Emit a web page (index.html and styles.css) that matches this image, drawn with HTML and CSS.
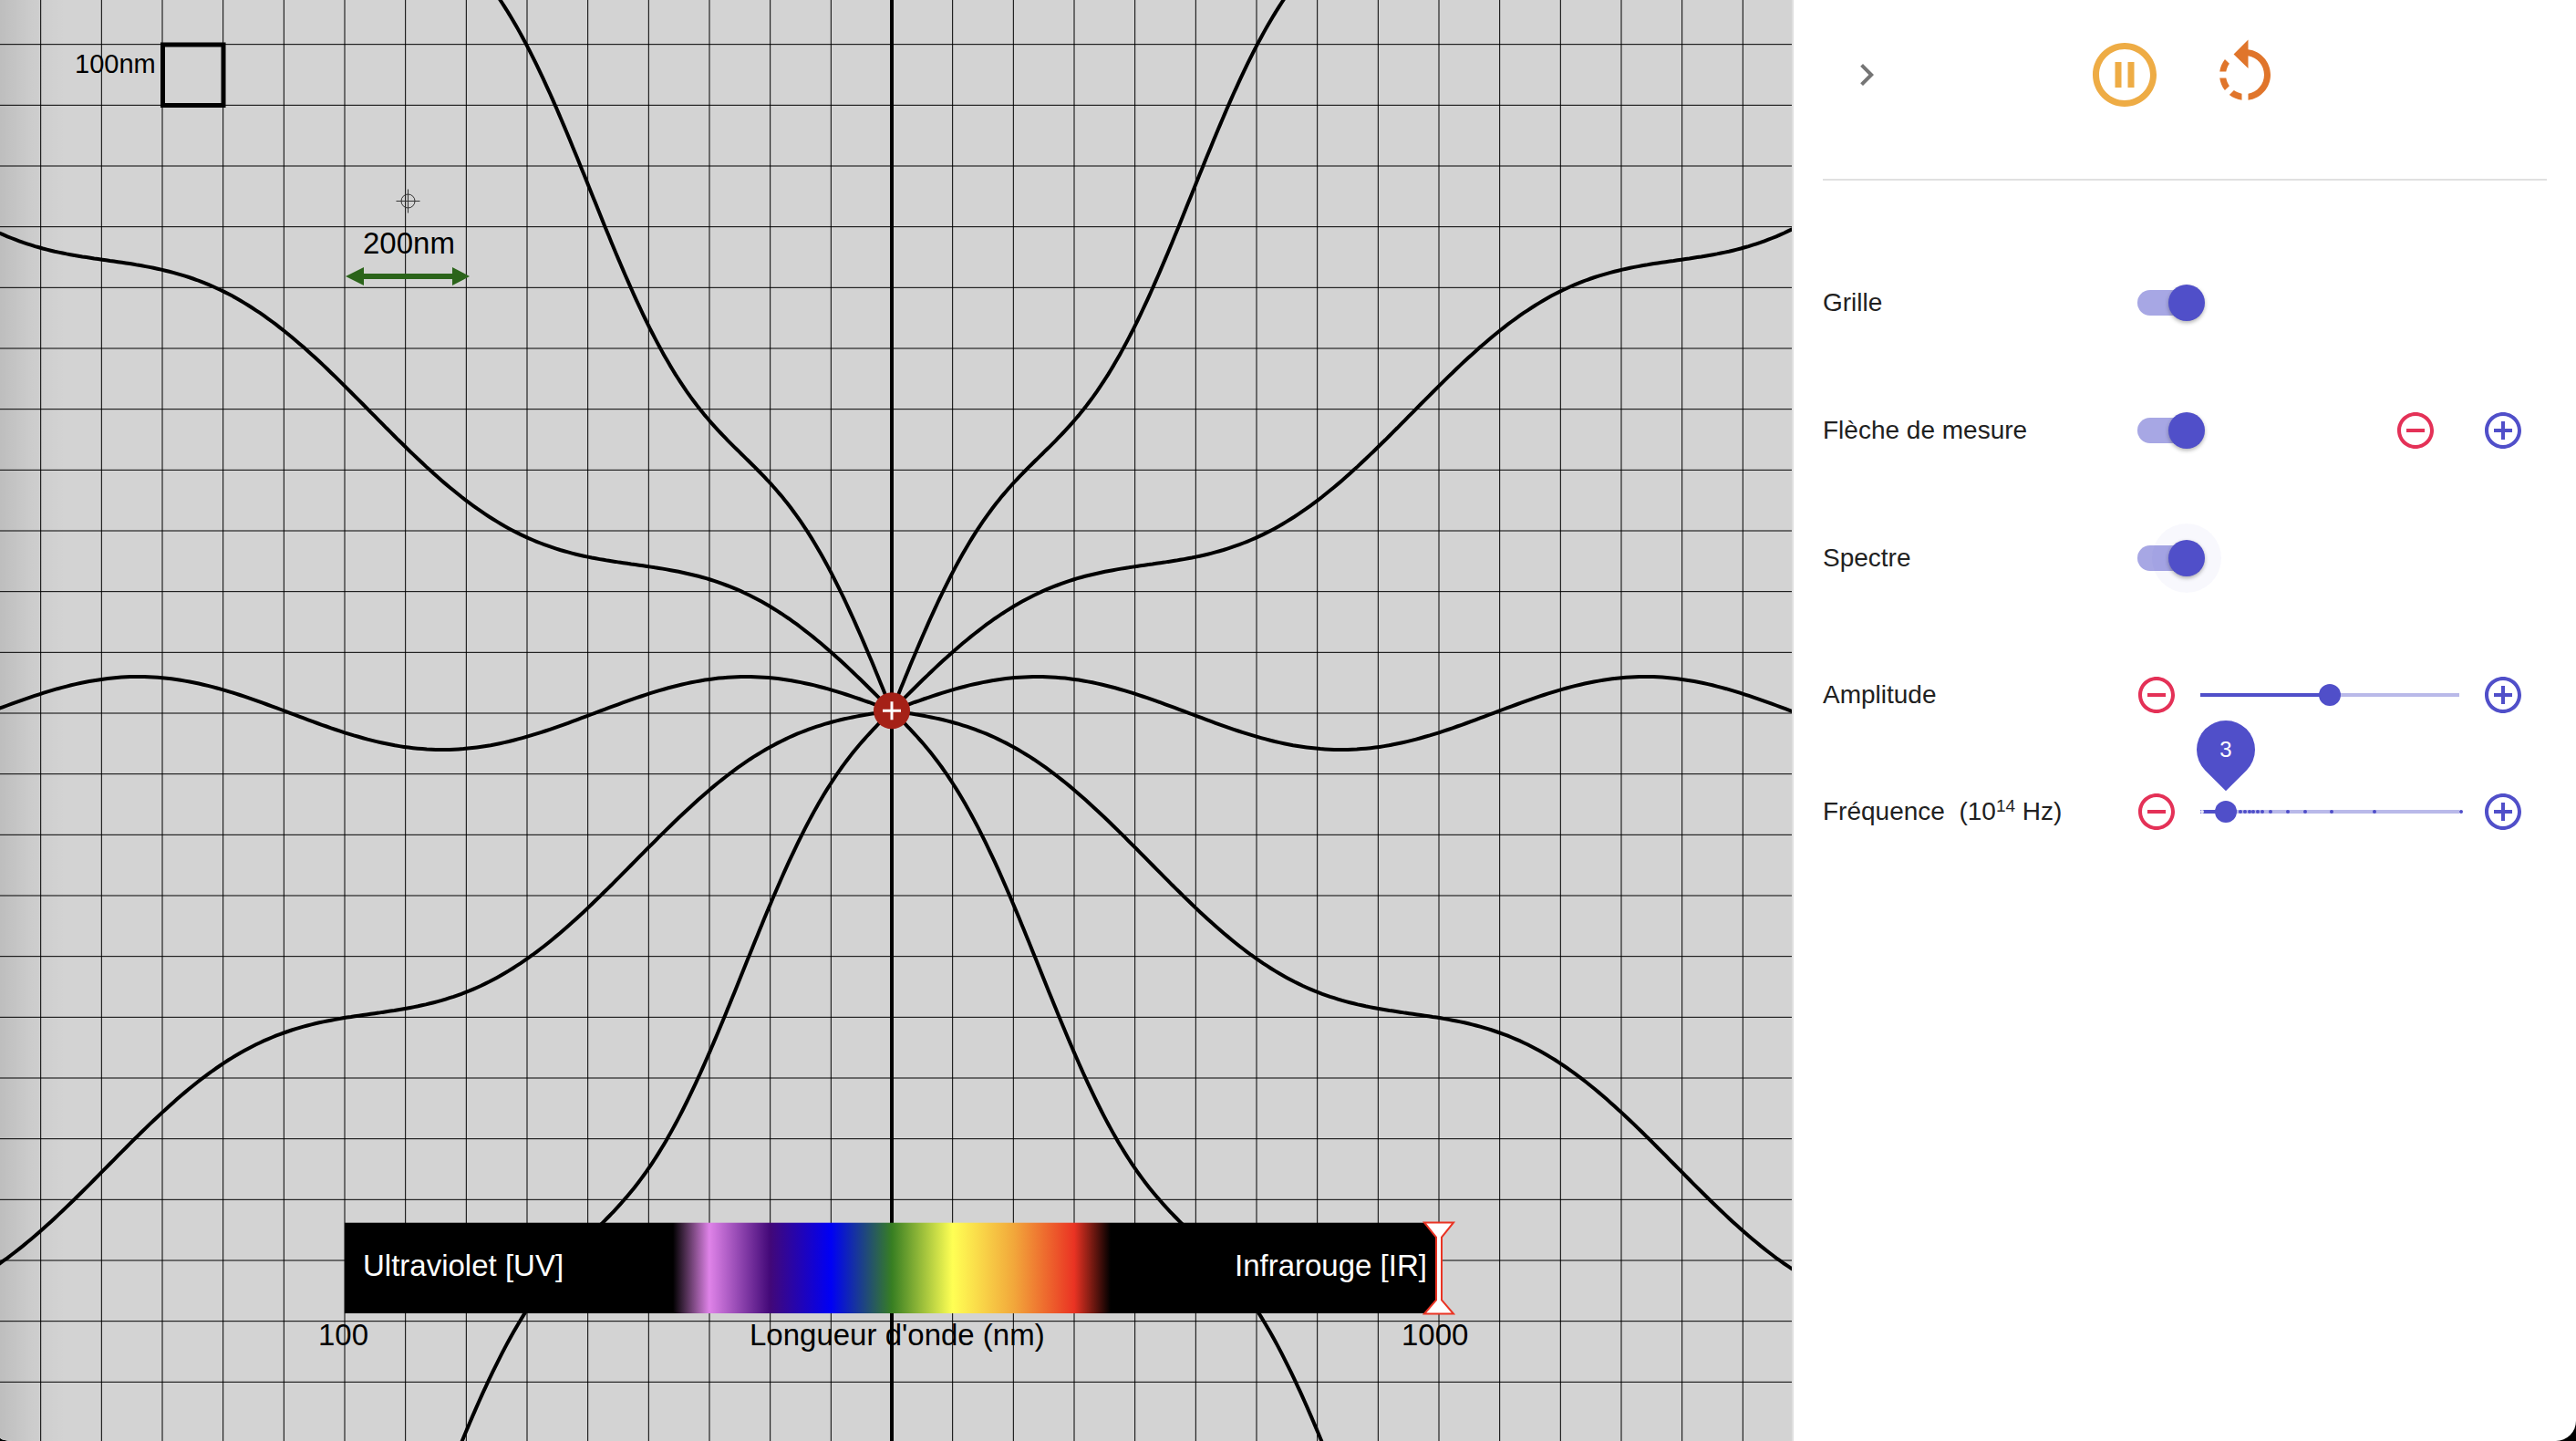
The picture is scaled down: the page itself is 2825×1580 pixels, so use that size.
FILE: index.html
```html
<!DOCTYPE html>
<html lang="fr">
<head>
<meta charset="utf-8">
<meta name="viewport" content="width=device-width, initial-scale=1">
<title>Ondes électromagnétiques</title>
<link rel="stylesheet" href="styles.css">
</head>
<body>
<div class="app">
  <main class="stage">
    <svg class="scene" viewBox="0 0 1965 1580" preserveAspectRatio="xMidYMid slice" role="img" aria-label="Lignes de champ">
      <defs>
        <linearGradient id="spectrum">
          <stop offset="30%" stop-color="#000"/>
          <stop offset="33.33%" stop-color="#df83e8"/>
          <stop offset="38.89%" stop-color="#420878"/>
          <stop offset="44.44%" stop-color="#0000f5"/>
          <stop offset="50%" stop-color="#377e22"/>
          <stop offset="55.56%" stop-color="#ffff54"/>
          <stop offset="61.11%" stop-color="#f2a83b"/>
          <stop offset="66.67%" stop-color="#ea3323"/>
          <stop offset="70%" stop-color="#000"/>
        </linearGradient>
      </defs>
      <path class="grid-lines" id="grid"/>
      <rect class="scale-box" x="178.5" y="49" width="66.5" height="66.5"/>
      <text class="note small" x="82" y="80">100nm</text>

      <g class="crosshair">
        <circle cx="447.5" cy="220.5" r="7.5"/>
        <path d="M434.5 220.5h26M447.5 207.5v26"/>
      </g>
      <text class="note" x="398" y="278">200nm</text>
      <path class="arrow" d="M379 303l20-10v7h97v-7l19 10-19 10v-7h-97v7z"/>

      <g class="field" id="field"></g>
      <circle class="charge" cx="978" cy="779.3" r="20"/>
      <path class="charge-sign" d="M968 779.3h20M978 769.3v20"/>

      <rect x="378" y="1340.7" width="1200" height="99.3" fill="url(#spectrum)"/>
      <text class="note light" x="398" y="1399">Ultraviolet [UV]</text>
      <text class="note light" x="1354" y="1399">Infrarouge [IR]</text>
      <path class="marker" d="M1562 1340.500h32l-13 16v69l13 15h-32l13-15v-69z"/>
      <text class="note" x="349" y="1475">100</text>
      <text class="note" x="822" y="1475">Longueur d'onde (nm)</text>
      <text class="note" x="1537" y="1475">1000</text>
    </svg>
  </main>

  <aside class="panel">
    <header class="toolbar">
      <button class="icon-button muted" type="button" aria-label="Replier">
        <svg class="icon" viewBox="0 0 24 24"><path d="M8.59 16.59 13.17 12 8.59 7.410 10 6l6 6-6 6z"/></svg>
      </button>
      <div class="playback">
        <button class="icon-button pause" type="button" aria-label="Pause">
          <svg class="icon large" viewBox="0 0 24 24"><path d="M9 16h2V8H9v8zm3-14C6.480 2 2 6.480 2 12s4.480 10 10 10 10-4.480 10-10S17.520 2 12 2zm0 18c-4.410 0-8-3.590-8-8s3.590-8 8-8 8 3.590 8 8-3.590 8-8 8zm1-4h2V8h-2v8z"/></svg>
        </button>
        <button class="icon-button reset" type="button" aria-label="Réinitialiser">
          <svg class="icon large" viewBox="0 0 24 24"><path d="M7.110 8.530 5.700 7.110C4.800 8.270 4.240 9.610 4.070 11h2.020c.14-.87.49-1.720 1.020-2.470zM6.090 13H4.070c.17 1.390.72 2.730 1.620 3.890l1.410-1.420c-.52-.75-.87-1.590-1.010-2.470zm1.010 5.320c1.160.9 2.510 1.440 3.900 1.610V17.900c-.87-.15-1.710-.49-2.460-1.030L7.100 18.320zM13 4.070V1L8.450 5.550 13 10V6.090c2.840.48 5 2.940 5 5.910s-2.160 5.430-5 5.910v2.020c3.950-.49 7-3.850 7-7.930s-3.050-7.440-7-7.930z"/></svg>
        </button>
      </div>
    </header>

    <form class="controls">
      <div class="row">
        <label for="grille">Grille</label>
        <input class="switch" type="checkbox" id="grille" checked>
      </div>
      <div class="row">
        <label for="fleche">Flèche de mesure</label>
        <input class="switch" type="checkbox" id="fleche" checked>
        <div class="stepper">
          <button class="icon-button minus" type="button" aria-label="Réduire la flèche">
            <svg class="icon" viewBox="0 0 24 24"><path d="M7 11v2h10v-2H7zm5-9C6.480 2 2 6.480 2 12s4.480 10 10 10 10-4.480 10-10S17.520 2 12 2zm0 18c-4.410 0-8-3.590-8-8s3.590-8 8-8 8 3.590 8 8-3.590 8-8 8z"/></svg>
          </button>
          <button class="icon-button plus" type="button" aria-label="Agrandir la flèche">
            <svg class="icon" viewBox="0 0 24 24"><path d="M13 7h-2v4H7v2h4v4h2v-4h4v-2h-4V7zm-1-5C6.480 2 2 6.480 2 12s4.480 10 10 10 10-4.480 10-10S17.520 2 12 2zm0 18c-4.410 0-8-3.590-8-8s3.590-8 8-8 8 3.590 8 8-3.590 8-8 8z"/></svg>
          </button>
        </div>
      </div>
      <div class="row">
        <label for="spectre">Spectre</label>
        <input class="switch active" type="checkbox" id="spectre" checked>
      </div>

      <div class="sliders">
        <div class="row">
          <label for="amplitude">Amplitude</label>
          <button class="icon-button minus" type="button" aria-label="Diminuer l'amplitude">
            <svg class="icon" viewBox="0 0 24 24"><path d="M7 11v2h10v-2H7zm5-9C6.480 2 2 6.480 2 12s4.480 10 10 10 10-4.480 10-10S17.520 2 12 2zm0 18c-4.410 0-8-3.590-8-8s3.590-8 8-8 8 3.590 8 8-3.590 8-8 8z"/></svg>
          </button>
          <div class="slider" style="--value: 50%">
            <input type="range" id="amplitude" min="0" max="100" value="50">
          </div>
          <button class="icon-button plus" type="button" aria-label="Augmenter l'amplitude">
            <svg class="icon" viewBox="0 0 24 24"><path d="M13 7h-2v4H7v2h4v4h2v-4h4v-2h-4V7zm-1-5C6.480 2 2 6.480 2 12s4.480 10 10 10 10-4.480 10-10S17.520 2 12 2zm0 18c-4.410 0-8-3.590-8-8s3.590-8 8-8 8 3.590 8 8-3.590 8-8 8z"/></svg>
          </button>
        </div>
        <div class="row">
          <label for="frequence">Fréquence&nbsp; (10<sup>14</sup> Hz)</label>
          <button class="icon-button minus" type="button" aria-label="Diminuer la fréquence">
            <svg class="icon" viewBox="0 0 24 24"><path d="M7 11v2h10v-2H7zm5-9C6.480 2 2 6.480 2 12s4.480 10 10 10 10-4.480 10-10S17.520 2 12 2zm0 18c-4.410 0-8-3.590-8-8s3.590-8 8-8 8 3.590 8 8-3.590 8-8 8z"/></svg>
          </button>
          <div class="slider" id="frequence-slider" style="--value: 10%">
            <input type="range" id="frequence" min="0" max="30" step="0.1" value="3">
            <output class="bubble" for="frequence"><span>3</span></output>
          </div>
          <button class="icon-button plus" type="button" aria-label="Augmenter la fréquence">
            <svg class="icon" viewBox="0 0 24 24"><path d="M13 7h-2v4H7v2h4v4h2v-4h4v-2h-4V7zm-1-5C6.480 2 2 6.480 2 12s4.480 10 10 10 10-4.480 10-10S17.520 2 12 2zm0 18c-4.410 0-8-3.590-8-8s3.590-8 8-8 8 3.590 8 8-3.590 8-8 8z"/></svg>
          </button>
        </div>
      </div>
    </form>
  </aside>
</div>
<script src="script.js"></script>
</body>
</html>
```

FILE: styles.css
```css
:root {
  --primary: #504fc9;
  --danger: #e43157;
  --divider: #e0e0e0;
}

* { box-sizing: border-box; }

body {
  margin: 0;
  background: #000;
  color: #212121;
  font-family: "Liberation Sans", Arial, Helvetica, sans-serif;
  font-size: 28px;
  line-height: 40px;
}

.app {
  display: grid;
  grid-template-columns: minmax(0, 1fr) 858px;
  min-height: 100vh;
  overflow: hidden;
  border-radius: 0 0 22px 14px / 0 0 22px 4px;
  background: #fff;
}

/* Simulation */

.stage {
  position: relative;
  border-right: 2px solid var(--divider);
  background: #d3d3d3;
}

.stage::before {
  content: "";
  position: absolute;
  inset: 0 auto 0 0;
  width: 72px;
  background: linear-gradient(to right, rgba(0, 0, 0, .1), rgba(0, 0, 0, .03) 50%, transparent);
}

.scene {
  position: absolute;
  inset: 0;
  width: 100%;
  height: 100%;
}

.grid-lines { stroke: #000; stroke-width: 1; fill: none; }
.scale-box { stroke: #000; stroke-width: 5; fill: none; }
.crosshair { stroke: #333; stroke-width: 1; fill: none; }
.arrow { fill: #2b641a; }
.field { stroke: #000; stroke-width: 4; fill: none; }
.charge { fill: #a52117; }
.charge-sign { stroke: #fff; stroke-width: 3; }
.marker { fill: #fff; stroke: #ea3323; stroke-width: 2; }
.note { font-size: 33px; fill: #000; }
.note.small { font-size: 29px; }
.note.light { fill: #fff; }

/* Panel */

.panel { padding: 0 32px 32px; }

.toolbar {
  display: grid;
  grid-template-columns: 1fr auto 1fr;
  align-items: center;
  justify-items: start;
  padding: 16px 0 48px;
  border-bottom: 2px solid var(--divider);
}

.playback { display: flex; }

.icon-button {
  display: flex;
  padding: 24px;
  border: 0;
  border-radius: 50%;
  background: none;
  color: inherit;
  cursor: pointer;
}

.icon { width: 48px; height: 48px; fill: currentColor; }
.icon.large { width: 84px; height: 84px; }

.muted { color: #757575; }
.pause { color: #eeac45; }
.reset { color: #e0752b; }
.minus { color: var(--danger); }
.plus { color: var(--primary); }

.controls {
  display: flex;
  flex-direction: column;
  gap: 44px;
  padding-top: 86px;
}

.sliders {
  display: flex;
  flex-direction: column;
  gap: 32px;
  padding-top: 10px;
}

.row {
  display: flex;
  align-items: center;
  min-height: 96px;
}

.row > label { flex: 0 0 40%; }

sup { font-size: 19px; line-height: 0; vertical-align: 9px; }

.stepper { display: flex; margin-left: auto; }

.switch {
  position: relative;
  appearance: none;
  width: 68px;
  height: 28px;
  margin: 0 0 0 27px;
  border-radius: 14px;
  background: #bdbdbd;
  cursor: pointer;
}

.switch:checked { background: #a7a7e4; }

.switch::after {
  content: "";
  position: absolute;
  top: -6px;
  left: -6px;
  width: 40px;
  height: 40px;
  border-radius: 50%;
  background: #fafafa;
  box-shadow: 0 2px 4px rgba(0, 0, 0, .3);
}

.switch:checked::after { left: 34px; background: var(--primary); }

.switch.active::before {
  content: "";
  position: absolute;
  top: -24px;
  left: 16px;
  width: 76px;
  height: 76px;
  border-radius: 50%;
  background: rgba(80, 79, 201, .04);
}

.slider {
  position: relative;
  flex: 1;
  min-width: 0;
  height: 48px;
  background:
    linear-gradient(var(--primary), var(--primary)) 0 50% / var(--value) 4px no-repeat,
    linear-gradient(#b9b9e9, #b9b9e9) 0 50% / 100% 4px no-repeat;
}

.slider input {
  position: absolute;
  inset: 0 -12px;
  width: calc(100% + 24px);
  height: 48px;
  margin: 0;
  appearance: none;
  background: none;
  cursor: pointer;
}

.slider input::-webkit-slider-thumb {
  appearance: none;
  width: 24px;
  height: 24px;
  border-radius: 50%;
  background: var(--primary);
}

.mark {
  position: absolute;
  top: 22px;
  width: 4px;
  height: 4px;
  border-radius: 2px;
  background: var(--primary);
}

.mark.passed { background: #e9e9f8; }

.bubble {
  position: absolute;
  bottom: 60px;
  left: var(--value);
  display: flex;
  align-items: center;
  justify-content: center;
  width: 64px;
  height: 64px;
  margin-left: -32px;
  color: #fff;
  font-size: 24px;
}

.bubble::before {
  content: "";
  position: absolute;
  inset: 0;
  border-radius: 50% 50% 50% 0;
  background: var(--primary);
  transform: rotate(-45deg);
}

.bubble span { position: relative; }
```

FILE: script.js
```js
const SVG = 'http://www.w3.org/2000/svg';
const width = 1965;
const height = 1580;
const origin = { x: 978, y: 782 };
const cell = 200 / 3;          // 100 nm
const wavelength = 10 * cell;  // 3e14 Hz
const amplitude = 40;
const phase = 0.068;

// Grid centred on the rest position of the charge
let d = '';
for (let x = origin.x % cell; x < width; x += cell) d += `M${x.toFixed(2)} 0V${height}`;
for (let y = origin.y % cell; y < height; y += cell) d += `M0 ${y.toFixed(2)}H${width}`;
document.getElementById('grid').setAttribute('d', d);

// Each field line keeps the height the charge had when the wave left it
const field = document.getElementById('field');
for (let angle = 0; angle < 360; angle += 30) {
  const a = angle * Math.PI / 180;
  const points = [];
  for (let r = 0; r <= 1400; r += 5) {
    const shift = amplitude * Math.sin(2 * Math.PI * r / wavelength + phase);
    const x = origin.x + r * Math.cos(a);
    const y = origin.y - r * Math.sin(a) - shift;
    points.push(`${x.toFixed(1)},${y.toFixed(1)}`);
  }
  const line = document.createElementNS(SVG, 'polyline');
  line.setAttribute('points', points.join(' '));
  field.append(line);
}

const slider = document.getElementById('frequence-slider');
const input = slider.querySelector('input');
for (const f of [0, 4.5, 5, 5.5, 6, 6.5, 7, 8, 10, 12, 15, 20, 30]) {
  const mark = document.createElement('span');
  mark.className = f < 3 ? 'mark passed' : 'mark';
  mark.style.left = `${f / 30 * 100}%`;
  slider.insertBefore(mark, input);
}
```
